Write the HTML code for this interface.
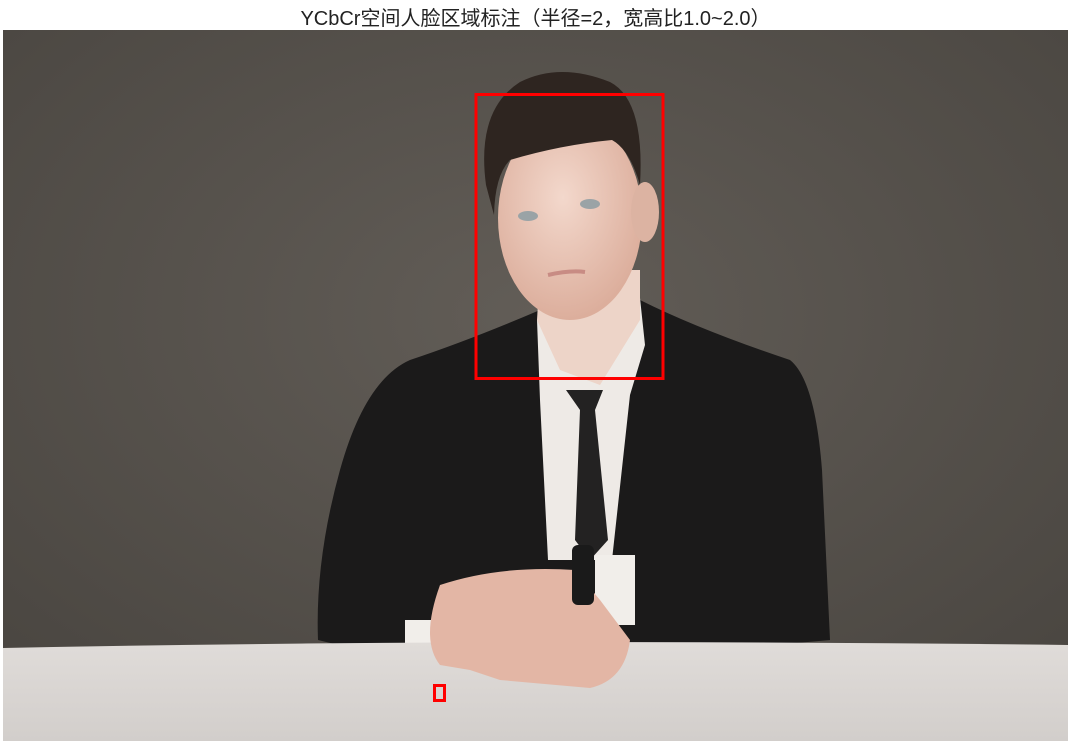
<!DOCTYPE html>
<html><head><meta charset="utf-8"><style>
body{margin:0;width:1071px;height:743px;background:#fff;overflow:hidden;font-family:"Liberation Sans","Noto Sans CJK SC",sans-serif}
.t{position:absolute;top:2px;left:0;width:1071px;text-align:center;font-size:20px;color:#222}
svg{position:absolute;left:0;top:0}
</style></head><body>
<div class="t">YCbCr空间人脸区域标注（半径=2，宽高比1.0~2.0）</div>
<svg width="1071" height="743">
<defs>
<radialGradient id="bg" cx="0.5" cy="0.4" r="0.7"><stop offset="0" stop-color="#625d57"/><stop offset="1" stop-color="#4a4641"/></radialGradient>
<linearGradient id="tb" x1="0" y1="0" x2="0" y2="1"><stop offset="0" stop-color="#e0dcd9"/><stop offset="1" stop-color="#d2cecb"/></linearGradient>
<radialGradient id="sk" cx="0.45" cy="0.4" r="0.6"><stop offset="0" stop-color="#f3d8cc"/><stop offset="1" stop-color="#dcae9c"/></radialGradient>
</defs>
<rect x="3" y="30" width="1065" height="711" fill="url(#bg)"/>
<path d="M410 360 Q470 340 540 310 L640 300 Q700 330 790 360 Q815 380 822 470 L830 640 L720 650 L420 665 L318 640 Q315 560 340 470 Q365 380 410 360Z" fill="#1b1a1a"/>
<path d="M537 320 L560 300 L640 298 L645 345 L630 395 L612 560 L548 560 L540 400Z" fill="#eeeae6"/>
<path d="M566 390 L603 390 L595 410 L608 540 L590 560 L575 540 L580 410Z" fill="#232222"/>
<path d="M540 270 L640 270 L640 320 L600 385 L560 370 L537 320Z" fill="#edd4c8"/>
<ellipse cx="570" cy="218" rx="72" ry="102" fill="url(#sk)"/>
<ellipse cx="645" cy="212" rx="14" ry="30" fill="#dcb3a2"/>
<path d="M486 185 Q476 110 520 82 Q560 62 610 82 Q645 100 640 185 Q630 150 612 140 Q560 145 510 160 Q495 175 494 215Z" fill="#2e2520"/>
<ellipse cx="528" cy="216" rx="10" ry="5" fill="#9aa3a6"/><ellipse cx="590" cy="204" rx="10" ry="5" fill="#9aa3a6"/>
<path d="M548 275 Q570 270 585 272" stroke="#c88c84" stroke-width="4" fill="none"/>
<rect x="595" y="555" width="40" height="70" fill="#f1eeea"/>
<rect x="405" y="620" width="40" height="50" fill="#f1eeea"/>
<path d="M3 648 Q500 638 1068 645 L1068 741 L3 741Z" fill="url(#tb)"/>
<path d="M440 585 Q500 565 575 570 L600 600 L630 640 Q625 680 590 688 L500 680 L470 670 L440 665 Q420 640 440 585Z" fill="#e3b6a5"/>
<rect x="572" y="545" width="22" height="60" rx="6" fill="#1a1a1a"/>
<rect x="476" y="94.5" width="187" height="284" fill="none" stroke="#f00" stroke-width="3"/>
<rect x="434.5" y="685.5" width="10" height="15" fill="none" stroke="#f00" stroke-width="3"/>
</svg>
</body></html>
